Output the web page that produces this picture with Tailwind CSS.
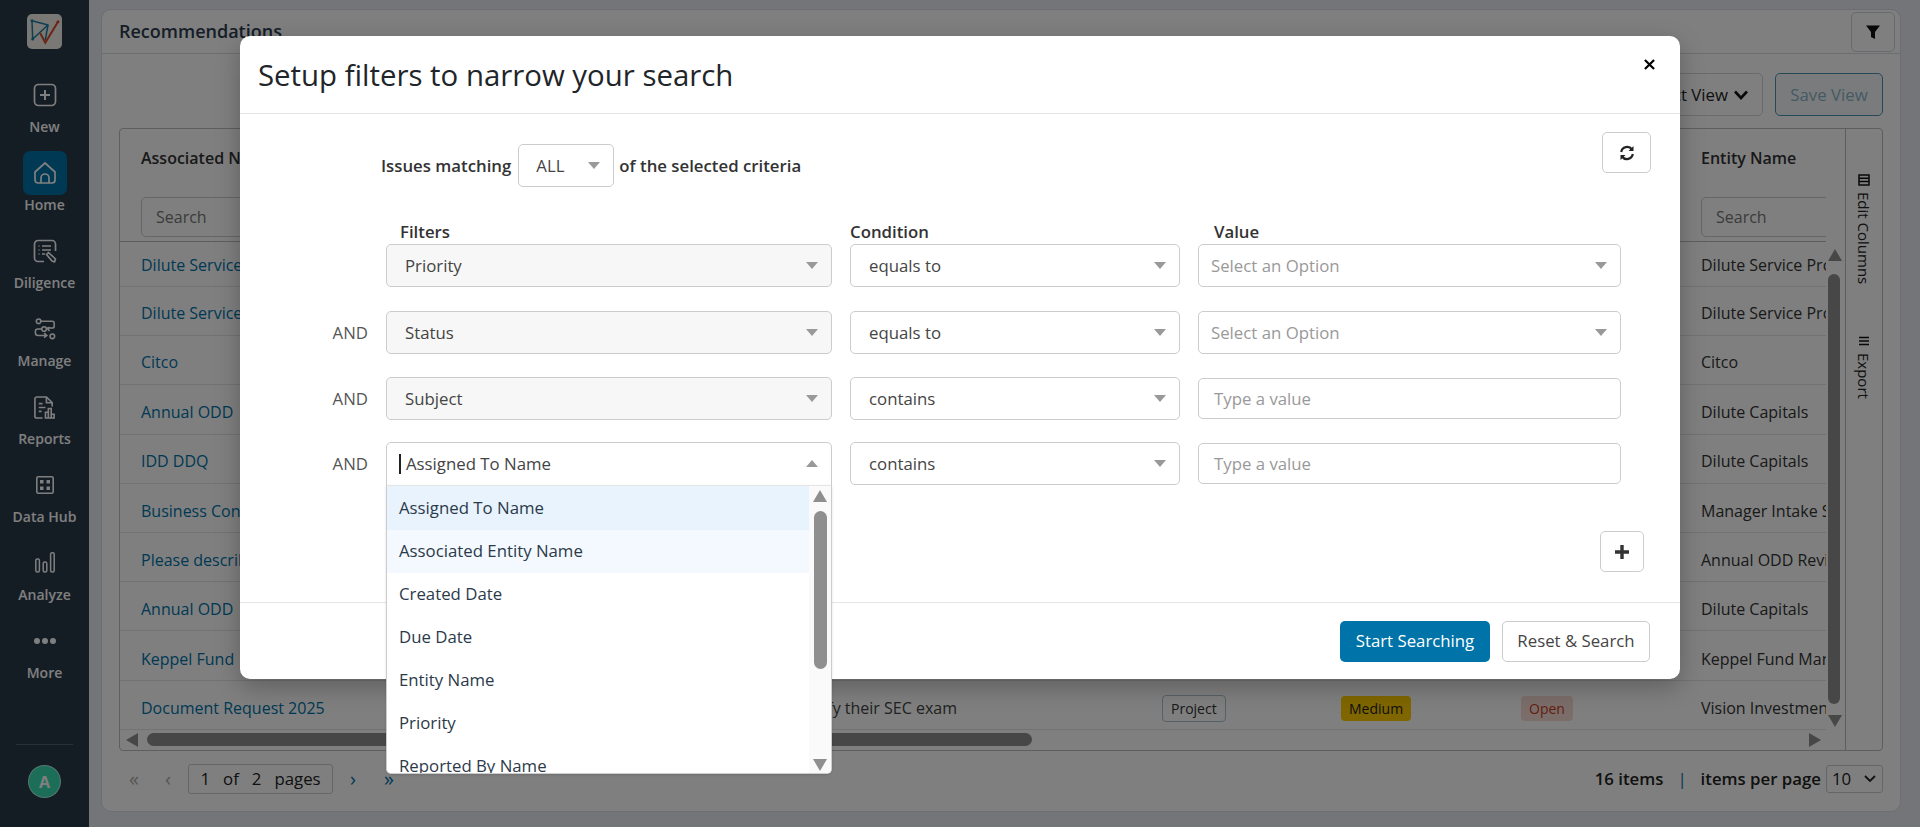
<!DOCTYPE html>
<html lang="en">
  <head>
    <meta charset="UTF-8" />
    <meta name="viewport" content="width=device-width, initial-scale=1.0" />
    <title>Recommendations</title>
    <script src="https://cdn.jsdelivr.net/npm/@tailwindcss/browser@4"></script>
  </head>
  <body class="h-[827px] w-[1920px] overflow-hidden bg-[#e6eaf0] font-['Open_Sans',sans-serif] text-[16.8px] text-[#333]">
    <div class="flex h-[827px]">
      <!-- Sidebar -->
      <aside class="flex h-full w-[89px] shrink-0 flex-col items-center bg-[#293949] pt-[14px] pb-[29px] text-white">
        <div class="flex h-[35px] w-[35px] items-center justify-center rounded-[5px] bg-[#f3f0ea]">
          <svg viewBox="0 0 35 35" class="h-[35px] w-[35px]" fill="none" stroke-width="1.5">
            <path d="M5 6.7 L21 11 L5.7 25 Z" stroke="#1c7fa5" stroke-linejoin="round" />
            <path d="M21 11 L18.3 26" stroke="#1c7fa5" />
            <path d="M13.3 19.3 L18.3 28.7 L31 7.7" stroke="#d9472b" stroke-width="2" />
            <circle cx="5" cy="6.7" r="1.5" fill="#1c7fa5" />
            <circle cx="5.7" cy="25" r="1.5" fill="#1c7fa5" />
            <circle cx="31" cy="7.7" r="1.5" fill="#d9472b" />
          </svg>
        </div>
        <nav class="mt-[24px] flex flex-col items-center">
          <a class="flex h-[78px] w-[89px] flex-col items-center">
            <span class="flex h-[44px] w-[44px] items-center justify-center">
              <svg viewBox="0 0 24 24" class="h-[24px] w-[24px]" fill="none" stroke="currentColor" stroke-width="1.7"><rect x="1.5" y="1.5" width="21" height="21" rx="4" /><path d="M12 7v10M7 12h10" stroke-width="2" /></svg>
            </span>
            <span class="text-[14px] leading-[20px] font-semibold">New</span>
          </a>
          <a class="flex h-[78px] w-[89px] flex-col items-center">
            <span class="flex h-[44px] w-[44px] items-center justify-center rounded-[7px] bg-[#0073a8]">
              <svg viewBox="0 0 24 24" class="h-[24px] w-[24px]" fill="none" stroke="currentColor" stroke-width="1.7"><path d="M2 11 L12 2 L22 11 V19 a3 3 0 0 1 -3 3 H5 a3 3 0 0 1 -3 -3 Z" stroke-linejoin="round" /><path d="M8 22 V17 a4 4 0 0 1 8 0 V22" /></svg>
            </span>
            <span class="text-[14px] leading-[20px] font-semibold">Home</span>
          </a>
          <a class="flex h-[78px] w-[89px] flex-col items-center">
            <span class="flex h-[44px] w-[44px] items-center justify-center">
              <svg viewBox="0 0 24 24" class="h-[24px] w-[24px]" fill="none" stroke="currentColor" stroke-width="1.7"><path d="M11 22.5 H5 a3.5 3.5 0 0 1 -3.5 -3.5 V5 A3.5 3.5 0 0 1 5 1.5 H19 A3.5 3.5 0 0 1 22.5 5 V12" /><path d="M5.5 7h1M9 7h9M5.5 11h1M9 11h9M5.5 15h1M9 15h3" /><path d="M13.5 15.5 L15.5 13.5 L22.5 20 L21.5 23 L19 22 Z" stroke-linejoin="round" /></svg>
            </span>
            <span class="text-[14px] leading-[20px] font-semibold">Diligence</span>
          </a>
          <a class="flex h-[78px] w-[89px] flex-col items-center">
            <span class="flex h-[44px] w-[44px] items-center justify-center">
              <svg viewBox="0 0 24 24" class="h-[22px] w-[22px]" fill="none" stroke="currentColor" stroke-width="1.7"><circle cx="5" cy="3.5" r="2.5" /><path d="M7.5 3.5 H20 a2 2 0 0 1 2 2 V9 a2 2 0 0 1 -2 2 H14" /><circle cx="11" cy="12" r="2.5" /><path d="M8.5 12 H4 a2.5 2.5 0 0 0 -2.5 2.5 V16 A3 3 0 0 0 4.5 19 H14 M11 16.5 L14 19 L11 21.5" /><circle cx="20" cy="20" r="2.5" /><path d="M17 10 L15 12 L17 14" /></svg>
            </span>
            <span class="text-[14px] leading-[20px] font-semibold">Manage</span>
          </a>
          <a class="flex h-[78px] w-[89px] flex-col items-center">
            <span class="flex h-[44px] w-[44px] items-center justify-center">
              <svg viewBox="0 0 24 24" class="h-[23px] w-[23px]" fill="none" stroke="currentColor" stroke-width="1.7"><path d="M10 23 H4 a2 2 0 0 1 -2 -2 V3 A2 2 0 0 1 4 1 H14 L20 7 V11" /><path d="M14 1 V7 H20M6 8h4M6 12h7M6 16h3" /><path d="M13 17h3v6h-3zM16 13h3v10h-3zM19 19h3v4h-3z" /></svg>
            </span>
            <span class="text-[14px] leading-[20px] font-semibold">Reports</span>
          </a>
          <a class="flex h-[78px] w-[89px] flex-col items-center">
            <span class="flex h-[44px] w-[44px] items-center justify-center">
              <svg viewBox="0 0 18 18" class="h-[18px] w-[18px]"><rect x="0.8" y="0.8" width="16.4" height="16.4" rx="1.5" fill="none" stroke="currentColor" stroke-width="1.6" /><rect x="4" y="4" width="3.5" height="3.5" fill="currentColor" /><rect x="10.5" y="4" width="3.5" height="3.5" fill="currentColor" /><rect x="4" y="10.5" width="3.5" height="3.5" fill="currentColor" /><rect x="10.5" y="10.5" width="3.5" height="3.5" fill="currentColor" /></svg>
            </span>
            <span class="text-[14px] leading-[20px] font-semibold">Data Hub</span>
          </a>
          <a class="flex h-[78px] w-[89px] flex-col items-center">
            <span class="mb-[2px] flex h-[42px] w-[44px] items-center justify-center">
              <svg viewBox="0 0 20 21" class="h-[21px] w-[20px]" fill="none" stroke="currentColor" stroke-width="1.5"><rect x="0.8" y="7" width="3.6" height="13" rx="1.5" /><rect x="8.2" y="10" width="3.6" height="10" rx="1.5" /><rect x="15.6" y="0.8" width="3.6" height="19.2" rx="1.5" /></svg>
            </span>
            <span class="text-[14px] leading-[20px] font-semibold">Analyze</span>
          </a>
          <a class="flex h-[78px] w-[89px] flex-col items-center">
            <span class="flex h-[44px] w-[44px] items-center justify-center gap-[2px]">
              <i class="h-[6px] w-[6px] rounded-full bg-white"></i><i class="h-[6px] w-[6px] rounded-full bg-white"></i><i class="h-[6px] w-[6px] rounded-full bg-white"></i>
            </span>
            <span class="text-[14px] leading-[20px] font-semibold">More</span>
          </a>
        </nav>
        <div class="mt-auto h-px w-[57px] bg-white/20"></div>
        <div class="mt-[20px] flex h-[33px] w-[33px] items-center justify-center rounded-full border border-white/60 bg-[#38dcb0] text-[16px] font-bold">A</div>
      </aside>

      <!-- Main page behind the modal -->
      <main class="w-[1812px] pt-[9px] pl-[12px]">
        <section class="flex h-[803px] w-[1800px] flex-col rounded-[10px] border border-[#d9dde2] bg-white">
          <div class="flex h-[44px] items-center justify-between border-b border-[#d9dde2] pr-[5px] pl-[17px]">
            <h2 class="text-[18px] font-semibold text-[#2b3d4f]">Recommendations</h2>
            <button class="flex h-[40px] w-[44px] items-center justify-center rounded-[5px] border border-[#d0d4d9]">
              <svg viewBox="0 0 16 16" class="h-[16px] w-[16px]" fill="#111"><path d="M1 1.5h14L10 8v7l-4-2V8z" /></svg>
            </button>
          </div>
          <div class="flex h-[74px] items-start justify-end gap-[12px] px-[17px] pt-[19px]">
            <button class="flex h-[43px] w-[240px] items-center justify-end gap-[6px] rounded-[5px] border border-[#d0d4d9] pr-[14px] text-[#222]">Select View
              <svg viewBox="0 0 14 10" class="h-[10px] w-[14px]" fill="none" stroke="#111" stroke-width="2.6"><path d="M1 1.5 L7 8 L13 1.5" /></svg>
            </button>
            <button class="h-[43px] w-[108px] rounded-[5px] border border-[#4a93b3] bg-[#f4f7f9] text-[#8ab4c8]">Save View</button>
          </div>

          <div class="relative flex h-[623px] w-[1764px] self-center rounded-[4px] border border-[#b9bdc2] text-[16px]">
            <div class="w-[1706px] shrink-0 overflow-hidden">
              <div class="flex h-[113px] border-b border-[#b9bdc2]">
                <div class="w-[1560px] shrink-0 pt-[18px] pl-[21px]">
                  <div class="h-[22px] leading-[22px] font-semibold text-[#333]">Associated Name</div>
                  <div class="mt-[28px] flex h-[40px] w-[200px] items-center rounded-[5px] border border-[#c8ccd1] pl-[14px] text-[#777]">Search</div>
                </div>
                <div class="shrink-0 pt-[18px] pl-[21px]">
                  <div class="h-[22px] leading-[22px] font-semibold whitespace-nowrap text-[#333]">Entity Name</div>
                  <div class="mt-[28px] flex h-[40px] w-[160px] items-center rounded-[5px] border border-[#c8ccd1] pl-[14px] text-[#777]">Search</div>
                </div>
              </div>
              <div class="flex h-[45px] items-center border-b border-[#e2e4e7] pt-[2px]"><a class="w-[1560px] shrink-0 pl-[21px] text-[#0073a8]">Dilute Service</a><span class="pl-[21px] whitespace-nowrap">Dilute Service Provider</span></div>
              <div class="flex h-[49px] items-center border-b border-[#e2e4e7] pt-[4px]"><a class="w-[1560px] shrink-0 pl-[21px] text-[#0073a8]">Dilute Service</a><span class="pl-[21px] whitespace-nowrap">Dilute Service Provider</span></div>
              <div class="flex h-[49px] items-center border-b border-[#e2e4e7] pt-[4px]"><a class="w-[1560px] shrink-0 pl-[21px] text-[#0073a8]">Citco</a><span class="pl-[21px] whitespace-nowrap">Citco</span></div>
              <div class="flex h-[50px] items-center border-b border-[#e2e4e7] pt-[4px]"><a class="w-[1560px] shrink-0 pl-[21px] text-[#0073a8]">Annual ODD</a><span class="pl-[21px] whitespace-nowrap">Dilute Capitals</span></div>
              <div class="flex h-[49px] items-center border-b border-[#e2e4e7] pt-[4px]"><a class="w-[1560px] shrink-0 pl-[21px] text-[#0073a8]">IDD DDQ</a><span class="pl-[21px] whitespace-nowrap">Dilute Capitals</span></div>
              <div class="flex h-[49px] items-center border-b border-[#e2e4e7] pt-[6px]"><a class="w-[1560px] shrink-0 pl-[21px] text-[#0073a8]">Business Continuity</a><span class="pl-[21px] whitespace-nowrap">Manager Intake Survey</span></div>
              <div class="flex h-[49px] items-center border-b border-[#e2e4e7] pt-[6px]"><a class="w-[1560px] shrink-0 pl-[21px] text-[#0073a8]">Please describe</a><span class="pl-[21px] whitespace-nowrap">Annual ODD Review</span></div>
              <div class="flex h-[49px] items-center border-b border-[#e2e4e7] pt-[6px]"><a class="w-[1560px] shrink-0 pl-[21px] text-[#0073a8]">Annual ODD</a><span class="pl-[21px] whitespace-nowrap">Dilute Capitals</span></div>
              <div class="flex h-[50px] items-center border-b border-[#e2e4e7] pt-[6px]"><a class="w-[1560px] shrink-0 pl-[21px] text-[#0073a8]">Keppel Fund</a><span class="pl-[21px] whitespace-nowrap">Keppel Fund Manager</span></div>
              <div class="flex h-[49px] items-center border-b border-[#e2e4e7] pt-[6px]">
                <a class="w-[400px] shrink-0 pl-[21px] whitespace-nowrap text-[#0073a8]">Document Request 2025</a>
                <span class="w-[437px] shrink-0 text-right whitespace-nowrap text-[#444]">to verify their SEC exam</span>
                <span class="ml-[205px] w-[179px] shrink-0"><i class="rounded-[4px] border border-[#aac3d0] px-[8px] py-[3px] text-[14px] font-medium text-[#333] not-italic">Project</i></span>
                <span class="w-[180px] shrink-0"><i class="rounded-[4px] bg-[#ffcd00] px-[8px] py-[3px] text-[14px] font-medium text-[#222] not-italic">Medium</i></span>
                <span class="w-[159px] shrink-0"><i class="rounded-[4px] bg-[#f6dcd5] px-[8px] py-[3px] text-[14px] font-medium text-[#c9401e] not-italic">Open</i></span>
                <span class="pl-[21px] whitespace-nowrap">Vision Investments</span>
              </div>
            </div>
            <div class="w-[19px] shrink-0"></div>
            <div class="flex flex-1 flex-col items-center border-l border-[#b9bdc2] pt-[45px]">
              <span class="flex items-center gap-[6px] text-[15px] text-[#222] [writing-mode:vertical-rl]">
                <svg viewBox="0 0 12 12" class="h-[12px] w-[12px]" fill="none" stroke="#111" stroke-width="1.5"><rect x="1" y="1" width="10" height="10" /><path d="M1 4.3h10M1 7.6h10" /></svg>Edit Columns
              </span>
              <span class="mt-[51px] flex items-center gap-[6px] text-[15px] text-[#222] [writing-mode:vertical-rl]">
                <svg viewBox="0 0 12 12" class="h-[12px] w-[12px]" fill="none" stroke="#111" stroke-width="1.5"><path d="M1 2.5h10M1 6h10M1 9.5h10" /></svg>Export
              </span>
            </div>
            <!-- scrollbars -->
            <svg viewBox="0 0 14 12" class="absolute top-[120px] left-[1708px] h-[12px] w-[14px]" fill="#8f8f8f"><path d="M7 0 L14 12 H0 Z" /></svg>
            <div class="absolute top-[145px] left-[1708px] h-[430px] w-[12px] rounded-full bg-[#8f8f8f]"></div>
            <svg viewBox="0 0 14 12" class="absolute top-[586px] left-[1708px] h-[12px] w-[14px]" fill="#8f8f8f"><path d="M0 0 H14 L7 12 Z" /></svg>
            <svg viewBox="0 0 12 14" class="absolute top-[604px] left-[6px] h-[14px] w-[12px]" fill="#8f8f8f"><path d="M12 0 V14 L0 7 Z" /></svg>
            <div class="absolute top-[604px] left-[27px] h-[13px] w-[885px] rounded-full bg-[#8f8f8f]"></div>
            <svg viewBox="0 0 12 14" class="absolute top-[604px] left-[1689px] h-[14px] w-[12px]" fill="#8f8f8f"><path d="M0 0 V14 L12 7 Z" /></svg>
          </div>

          <div class="mt-[13px] flex h-[30px] items-center px-[17px]">
            <span class="ml-[10px] w-[36px] text-[20px] text-[#aaa]">«</span>
            <span class="w-[23px] text-[20px] text-[#aaa]">‹</span>
            <span class="flex h-[30px] w-[145px] items-center justify-center gap-[13px] rounded-[3px] border border-[#c8ccd1] font-medium text-[#222]"><b class="font-medium">1</b><b class="font-medium">of</b><b class="font-medium">2</b><b class="font-medium">pages</b></span>
            <span class="ml-[17px] w-[34px] text-[20px] text-[#0073a8]">›</span>
            <span class="text-[20px] text-[#0073a8]">»</span>
            <span class="ml-auto font-semibold text-[#222]">16 items</span>
            <span class="mx-[14px] text-[#0073a8]">|</span>
            <span class="font-semibold text-[#222]">items per page</span>
            <span class="ml-[5px] flex h-[28px] w-[57px] items-center justify-between rounded-[3px] border border-[#c8ccd1] pr-[6px] pl-[5px] text-[#222]">10
              <svg viewBox="0 0 12 8" class="h-[8px] w-[12px]" fill="none" stroke="#222" stroke-width="1.8"><path d="M1 1 L6 6 L11 1" /></svg>
            </span>
          </div>
        </section>
      </main>
    </div>

    <!-- Modal overlay -->
    <div class="absolute inset-0 bg-black/50"></div>
    <div class="absolute top-[36px] left-[240px] flex h-[643px] w-[1440px] flex-col rounded-[10px] bg-white shadow-[0_8px_24px_rgba(0,0,0,0.25)]">
      <header class="flex h-[78px] shrink-0 items-center justify-between border-b border-[#e5e5e5] pr-[25px] pl-[18px]">
        <h1 class="text-[29.4px] leading-[36px] font-normal text-[#212529]">Setup filters to narrow your search</h1>
        <svg viewBox="0 0 12 12" class="mb-[20px] h-[11px] w-[11px]" stroke="#000" stroke-width="2.4"><path d="M1 1 L11 11 M11 1 L1 11" /></svg>
      </header>

      <div class="relative flex-1">
        <div class="flex items-start justify-between pt-[18px] pr-[29px]">
          <div class="mt-[12px] flex h-[43px] items-center pl-[141px] font-semibold text-[#333]">
            Issues matching
            <span class="mr-[5px] ml-[7px] flex h-[43px] w-[96px] items-center justify-between rounded-[5px] border border-[#ccc] pr-[13px] pl-[17px] font-normal text-[#444]">ALL
              <svg viewBox="0 0 12 7" class="h-[7px] w-[12px]" fill="#999"><path d="M0 0 H12 L6 7 Z" /></svg>
            </span>
            of the selected criteria
          </div>
          <button class="flex h-[41px] w-[49px] items-center justify-center rounded-[5px] border border-[#ccc]">
            <svg viewBox="0 0 16 16" class="h-[16px] w-[16px]" fill="none" stroke="#222" stroke-width="2.2"><path d="M2.2 7 A6 6 0 0 1 13 4.5" /><path d="M13.8 9 A6 6 0 0 1 3 11.5" /><path d="M14.5 1 V6 H9.5 Z M1.5 15 V10 H6.5 Z" fill="#222" stroke="none" /></svg>
          </button>
        </div>

        <div class="mt-[34px] flex h-[23px] items-start leading-[22px] font-semibold text-[#333]">
          <span class="ml-[160px] w-[450px]">Filters</span>
          <span class="w-[364px]">Condition</span>
          <span>Value</span>
        </div>

        <div class="flex h-[43px] items-center gap-[18px]">
          <span class="w-[128px]"></span>
          <span class="flex h-[43px] w-[446px] items-center justify-between rounded-[5px] border border-[#ccc] bg-[#f7f7f7] pr-[13px] pl-[18px] text-[#444]">Priority<svg viewBox="0 0 12 7" class="h-[7px] w-[12px]" fill="#999"><path d="M0 0 H12 L6 7 Z" /></svg></span>
          <span class="flex h-[43px] w-[330px] items-center justify-between rounded-[5px] border border-[#ccc] pr-[13px] pl-[18px] text-[#444]">equals to<svg viewBox="0 0 12 7" class="h-[7px] w-[12px]" fill="#999"><path d="M0 0 H12 L6 7 Z" /></svg></span>
          <span class="flex h-[43px] w-[423px] items-center justify-between rounded-[5px] border border-[#ccc] pr-[13px] pl-[12px] text-[#999]">Select an Option<svg viewBox="0 0 12 7" class="h-[7px] w-[12px]" fill="#999"><path d="M0 0 H12 L6 7 Z" /></svg></span>
        </div>
        <div class="mt-[24px] flex h-[43px] items-center gap-[18px]">
          <span class="w-[128px] text-right text-[#555]">AND</span>
          <span class="flex h-[43px] w-[446px] items-center justify-between rounded-[5px] border border-[#ccc] bg-[#f7f7f7] pr-[13px] pl-[18px] text-[#444]">Status<svg viewBox="0 0 12 7" class="h-[7px] w-[12px]" fill="#999"><path d="M0 0 H12 L6 7 Z" /></svg></span>
          <span class="flex h-[43px] w-[330px] items-center justify-between rounded-[5px] border border-[#ccc] pr-[13px] pl-[18px] text-[#444]">equals to<svg viewBox="0 0 12 7" class="h-[7px] w-[12px]" fill="#999"><path d="M0 0 H12 L6 7 Z" /></svg></span>
          <span class="flex h-[43px] w-[423px] items-center justify-between rounded-[5px] border border-[#ccc] pr-[13px] pl-[12px] text-[#999]">Select an Option<svg viewBox="0 0 12 7" class="h-[7px] w-[12px]" fill="#999"><path d="M0 0 H12 L6 7 Z" /></svg></span>
        </div>
        <div class="mt-[23px] flex h-[43px] items-center gap-[18px]">
          <span class="w-[128px] text-right text-[#555]">AND</span>
          <span class="flex h-[43px] w-[446px] items-center justify-between rounded-[5px] border border-[#ccc] bg-[#f7f7f7] pr-[13px] pl-[18px] text-[#444]">Subject<svg viewBox="0 0 12 7" class="h-[7px] w-[12px]" fill="#999"><path d="M0 0 H12 L6 7 Z" /></svg></span>
          <span class="flex h-[43px] w-[330px] items-center justify-between rounded-[5px] border border-[#ccc] pr-[13px] pl-[18px] text-[#444]">contains<svg viewBox="0 0 12 7" class="h-[7px] w-[12px]" fill="#999"><path d="M0 0 H12 L6 7 Z" /></svg></span>
          <span class="flex h-[41px] w-[423px] items-center rounded-[5px] border border-[#ccc] pl-[15px] text-[#999]">Type a value</span>
        </div>
        <div class="mt-[22px] flex h-[43px] items-center gap-[18px]">
          <span class="w-[128px] text-right text-[#555]">AND</span>
          <span class="relative flex h-[44px] w-[446px] items-center justify-between rounded-t-[5px] border border-[#ccc] pr-[13px] pl-[12px] text-[#444]">
            <span class="flex items-center"><i class="mr-[5px] h-[20px] w-[2px] bg-[#222]"></i>Assigned To Name</span>
            <svg viewBox="0 0 12 7" class="h-[7px] w-[12px]" fill="#999"><path d="M6 0 L12 7 H0 Z" /></svg>
            <!-- open dropdown -->
            <div class="absolute top-[42px] -left-px z-10 flex h-[289px] w-[446px] overflow-hidden rounded-b-[5px] border border-t-[#e5e5e5] border-[#ccc] bg-white text-[#2b3a4a] shadow-sm">
              <ul class="w-[422px] shrink-0">
                <li class="flex h-[44px] items-center bg-[#e8f3fd] pl-[12px]">Assigned To Name</li>
                <li class="flex h-[43px] items-center bg-[#f3f9fe] pl-[12px]">Associated Entity Name</li>
                <li class="flex h-[43px] items-center pl-[12px]">Created Date</li>
                <li class="flex h-[43px] items-center pl-[12px]">Due Date</li>
                <li class="flex h-[43px] items-center pl-[12px]">Entity Name</li>
                <li class="flex h-[43px] items-center pl-[12px]">Priority</li>
                <li class="flex h-[43px] items-center pl-[12px]">Reported By Name</li>
              </ul>
              <div class="flex flex-1 flex-col items-center bg-[#fafafa] pt-[4px]">
                <svg viewBox="0 0 14 12" class="h-[12px] w-[14px]" fill="#8f8f8f"><path d="M7 0 L14 12 H0 Z" /></svg>
                <div class="mt-[9px] h-[158px] w-[13px] rounded-full bg-[#8f8f8f]"></div>
                <svg viewBox="0 0 14 12" class="mt-[90px] h-[12px] w-[14px]" fill="#8f8f8f"><path d="M0 0 H14 L7 12 Z" /></svg>
              </div>
            </div>
          </span>
          <span class="flex h-[43px] w-[330px] items-center justify-between rounded-[5px] border border-[#ccc] pr-[13px] pl-[18px] text-[#444]">contains<svg viewBox="0 0 12 7" class="h-[7px] w-[12px]" fill="#999"><path d="M0 0 H12 L6 7 Z" /></svg></span>
          <span class="flex h-[41px] w-[423px] items-center rounded-[5px] border border-[#ccc] pl-[15px] text-[#999]">Type a value</span>
        </div>

        <div class="mt-[46px] flex justify-end pr-[36px]">
          <button class="flex h-[41px] w-[44px] items-center justify-center rounded-[5px] border border-[#ccc]">
            <svg viewBox="0 0 14 14" class="h-[14px] w-[14px]" stroke="#333" stroke-width="3.4"><path d="M7 0 V14 M0 7 H14" /></svg>
          </button>
        </div>
      </div>

      <footer class="flex h-[77px] shrink-0 items-center justify-end gap-[12px] border-t border-[#e5e5e5] pr-[30px]">
        <button class="h-[41px] w-[150px] rounded-[5px] bg-[#0073a8] font-medium text-white">Start Searching</button>
        <button class="h-[41px] w-[148px] rounded-[5px] border border-[#ccc] font-medium text-[#444]">Reset &amp; Search</button>
      </footer>
    </div>
  </body>
</html>
